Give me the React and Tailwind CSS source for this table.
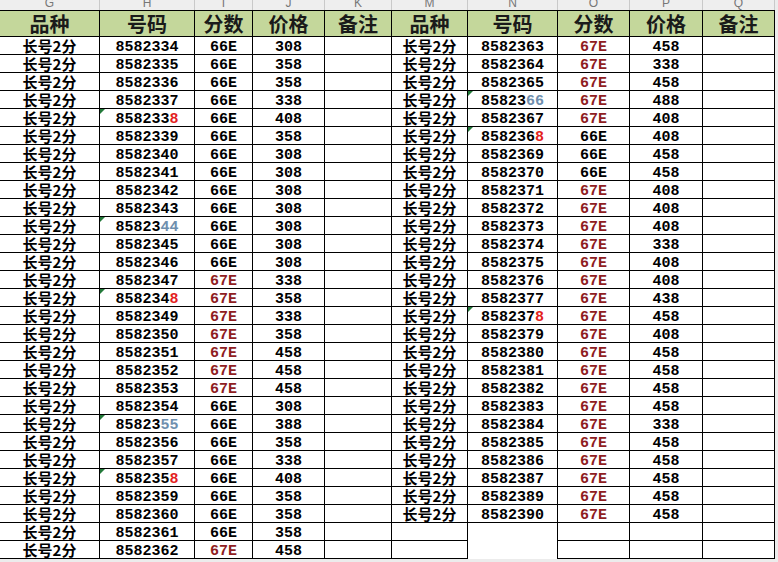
import React from 'react';

const cjk = "font-['Noto_Sans_CJK_SC','Noto_Sans',sans-serif]";
const mono = "font-['Liberation_Mono','DejaVu_Sans_Mono',monospace]";

const letters = ['G', 'H', 'I', 'J', 'K', 'M', 'N', 'O', 'P', 'Q'];
const heads = ['品种', '号码', '分数', '价格', '备注'];

// [number, score, price, highlighted tail, tail colour]
const left = [
  ['8582334', '66E', '308'], ['8582335', '66E', '358'], ['8582336', '66E', '358'],
  ['8582337', '66E', '338'], ['8582338', '66E', '408', '8', 'r'], ['8582339', '66E', '358'],
  ['8582340', '66E', '308'], ['8582341', '66E', '308'], ['8582342', '66E', '308'],
  ['8582343', '66E', '308'], ['8582344', '66E', '308', '44', 'b'], ['8582345', '66E', '308'],
  ['8582346', '66E', '308'], ['8582347', '67E', '338'], ['8582348', '67E', '358', '8', 'r'],
  ['8582349', '67E', '338'], ['8582350', '67E', '358'], ['8582351', '67E', '458'],
  ['8582352', '67E', '458'], ['8582353', '67E', '458'], ['8582354', '66E', '308'],
  ['8582355', '66E', '388', '55', 'b'], ['8582356', '66E', '358'], ['8582357', '66E', '338'],
  ['8582358', '66E', '408', '8', 'r'], ['8582359', '66E', '358'], ['8582360', '66E', '358'],
  ['8582361', '66E', '358'], ['8582362', '67E', '458'],
];

const right = [
  ['8582363', '67E', '458'], ['8582364', '67E', '338'], ['8582365', '67E', '458'],
  ['8582366', '67E', '488', '66', 'b'], ['8582367', '67E', '408'], ['8582368', '66E', '408', '8', 'r'],
  ['8582369', '66E', '458'], ['8582370', '66E', '458'], ['8582371', '67E', '408'],
  ['8582372', '67E', '408'], ['8582373', '67E', '408'], ['8582374', '67E', '338'],
  ['8582375', '67E', '408'], ['8582376', '67E', '408'], ['8582377', '67E', '438'],
  ['8582378', '67E', '458', '8', 'r'], ['8582379', '67E', '408'], ['8582380', '67E', '458'],
  ['8582381', '67E', '458'], ['8582382', '67E', '458'], ['8582383', '67E', '458'],
  ['8582384', '67E', '338'], ['8582385', '67E', '458'], ['8582386', '67E', '458'],
  ['8582387', '67E', '458'], ['8582389', '67E', '458'], ['8582390', '67E', '458'],
];

const cell = "h-[18px] border-r border-b border-black flex items-center justify-center";
const numCell = `${cell} ${mono} text-[15px] leading-none font-bold pt-[4px]`;

function Num({ row }) {
  const [num, , , tail, tone] = row;
  if (!tail) return <span>{num}</span>;
  return (
    <span>
      {num.slice(0, num.length - tail.length)}
      <span className={tone === 'r' ? 'text-[#e3221d]' : 'text-[#6f8fae]'}>{tail}</span>
    </span>
  );
}

function Rows({ rows }) {
  return rows.map((row, i) => (
    <React.Fragment key={i}>
      <div className={`${cell} ${cjk} text-[15px] leading-[17px] font-semibold text-black`}>长号2分</div>
      <div className={`${numCell} text-black relative`}>
        {row[3] && (
          <span className="absolute left-0 top-0 w-0 h-0 border-t-[5px] border-r-[5px] border-t-[#237a3a] border-r-transparent" />
        )}
        <Num row={row} />
      </div>
      <div className={`${numCell} ${row[1] === '67E' ? 'text-[#8f1d22]' : 'text-black'}`}>{row[1]}</div>
      <div className={`${numCell} text-black`}>{row[2]}</div>
      <div className={cell}></div>
    </React.Fragment>
  ));
}

function Letters({ list }) {
  return list.map((l) => (
    <div key={l} className="h-[10px] overflow-hidden bg-[#eeeeee] border-r border-[#c9c9c9] flex items-end justify-center">
      <span className="font-['Liberation_Sans',sans-serif] text-[12px] leading-[12px] text-[#777] mb-[1px]">{l}</span>
    </div>
  ));
}

function Heads() {
  return heads.map((h) => (
    <div key={h} className={`h-[27px] bg-[#c4d79b] border-r border-b border-t border-black flex items-center justify-center ${cjk} text-[20px] font-semibold text-[#1a1a1a] leading-none`}>{h}</div>
  ));
}

export default function App() {
  return (
    <div className="w-[778px] h-[562px] bg-[#ececec] overflow-hidden">
      <div className="flex">
        {/* left table G-K */}
        <div className="w-[392px] bg-white">
          <div className="grid grid-cols-[100px_95px_58px_72px_67px]">
            <Letters list={letters.slice(0, 5)} />
            <Heads />
            <Rows rows={left} />
          </div>
        </div>
        {/* right table M-Q */}
        <div className="w-[383px] bg-white">
          <div className="grid grid-cols-[76px_90px_72px_73px_72px]">
            <Letters list={letters.slice(5)} />
            <Heads />
            <Rows rows={right} />
            {[0, 1].map((r) => (
              <React.Fragment key={r}>
                <div className="h-[18px] border-r border-b border-black"></div>
                <div className="h-[18px] border-r border-black"></div>
                <div className="h-[18px] border-r border-b border-black"></div>
                <div className="h-[18px] border-r border-b border-black"></div>
                <div className="h-[18px] border-r border-b border-black"></div>
              </React.Fragment>
            ))}
          </div>
        </div>
      </div>
    </div>
  );
}
